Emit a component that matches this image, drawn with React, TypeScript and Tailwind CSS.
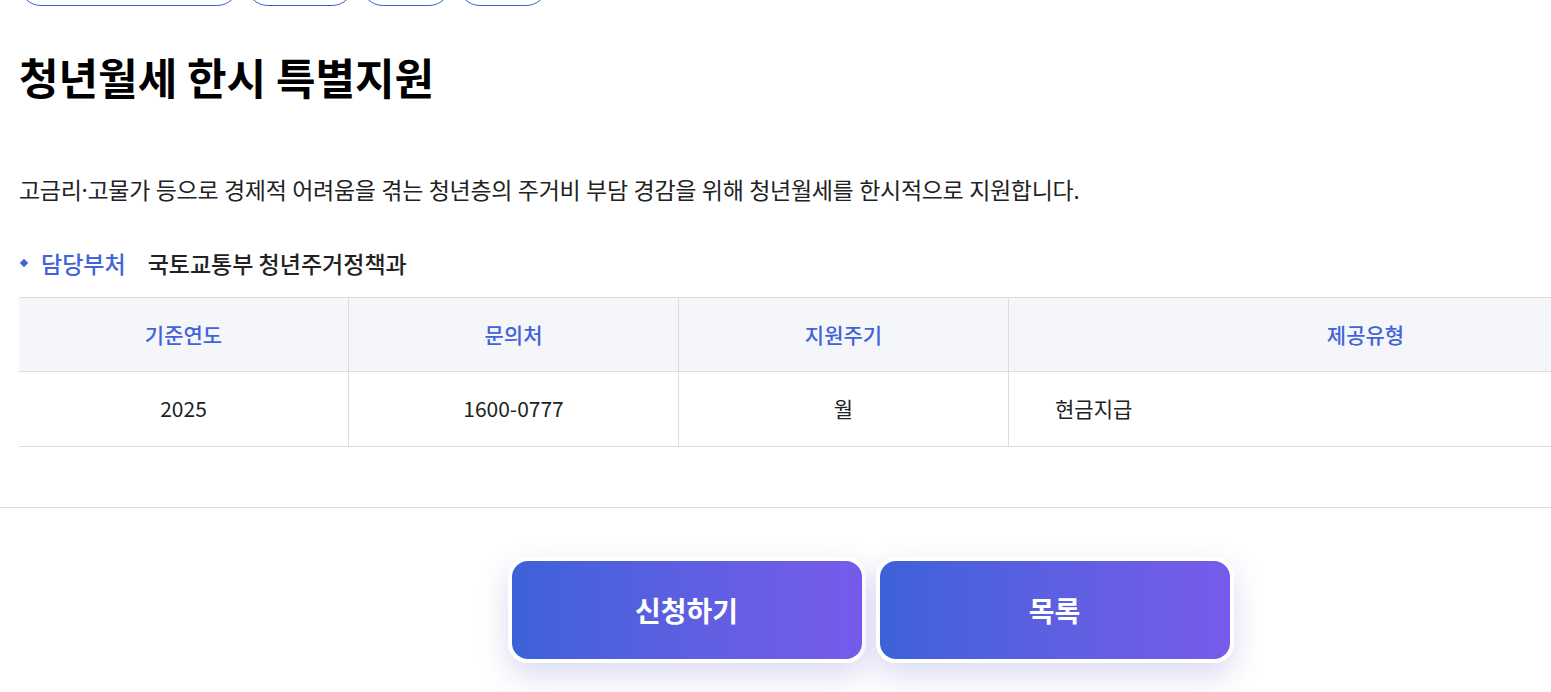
const FONT = { fontFamily: '"Noto Sans CJK KR", "Noto Sans", sans-serif' };
const TEXT_FONT = { fontFamily: '"Noto Sans", "Noto Sans CJK KR", sans-serif' };

const columns = [
    { head: "기준연도", value: "2025" },
    { head: "문의처", value: "1600-0777" },
    { head: "지원주기", value: "월" },
];

export default function App() {
    return (
        <div className="w-full h-[692px] overflow-hidden bg-white text-[#222]" style={FONT}>
            <div className="w-[1741px]">
                <div className="px-[19px]">
                    {/* 상단 태그 (위로 스크롤되어 잘린 상태) */}
                    <div className="flex gap-[7px] -mt-[38px]">
                        <span className="h-[44px] w-[220px] rounded-full border border-[#3f5fd6]" />
                        <span className="h-[44px] w-[108px] rounded-full border border-[#3f5fd6]" />
                        <span className="h-[44px] w-[90px] rounded-full border border-[#3f5fd6]" />
                        <span className="h-[44px] w-[90px] rounded-full border border-[#3f5fd6]" />
                    </div>

                    <h1 className="mt-[44px] text-[43px] leading-[52px] font-bold text-black">
                        청년월세 한시 특별지원
                    </h1>

                    <p className="mt-[72px] text-[23px] leading-[32px] tracking-[-0.3px] text-[#222]" style={TEXT_FONT}>
                        고금리·고물가 등으로 경제적 어려움을 겪는 청년층의 주거비 부담 경감을 위해 청년월세를 한시적으로 지원합니다.
                    </p>

                    <div className="mt-[41px] flex items-center text-[23px] leading-[32px]">
                        <span className="ml-[2px] mr-[14px] size-[6px] rotate-45 bg-[#4763d8]" />
                        <span className="font-medium text-[#4263d9]">담당부처</span>
                        <span className="ml-[22px] font-medium text-[#222]">국토교통부 청년주거정책과</span>
                    </div>

                    <div className="mt-[18px] border-t border-[#dcdcdc]">
                        <div className="flex h-[74px] bg-[#f5f6fa] border-b border-[#dcdcdc]">
                            {columns.map((c) => (
                                <div
                                    key={c.head}
                                    className="w-[330px] flex items-center justify-center border-r border-[#dcdcdc] text-[21px] font-medium text-[#4263d9]"
                                >
                                    {c.head}
                                </div>
                            ))}
                            <div className="flex-1 flex items-center justify-center text-[21px] font-medium text-[#4263d9]">
                                제공유형
                            </div>
                        </div>
                        <div className="flex h-[75px] border-b border-[#dcdcdc]">
                            {columns.map((c) => (
                                <div
                                    key={c.head}
                                    className="w-[330px] flex items-center justify-center border-r border-[#dcdcdc] text-[21px] text-[#222]"
                                >
                                    {c.value}
                                </div>
                            ))}
                            <div className="flex-1 flex items-center pl-[46px] text-[21px] text-[#222]">
                                현금지급
                            </div>
                        </div>
                    </div>
                </div>

                <div className="mt-[60px] border-t border-[#dedede]" />

                {/* 하단 버튼 */}
                <div className="mt-[49px] flex justify-center gap-[10px]">
                    <button className="w-[358px] h-[106px] rounded-[20px] border-[4px] border-white bg-gradient-to-r from-[#3c62d7] to-[#775beb] text-white text-[28px] font-bold shadow-[0_12px_30px_rgba(80,80,200,0.22)]">
                        신청하기
                    </button>
                    <button className="w-[358px] h-[106px] rounded-[20px] border-[4px] border-white bg-gradient-to-r from-[#3c62d7] to-[#775beb] text-white text-[28px] font-bold shadow-[0_12px_30px_rgba(80,80,200,0.22)]">
                        목록
                    </button>
                </div>
            </div>
        </div>
    );
}
